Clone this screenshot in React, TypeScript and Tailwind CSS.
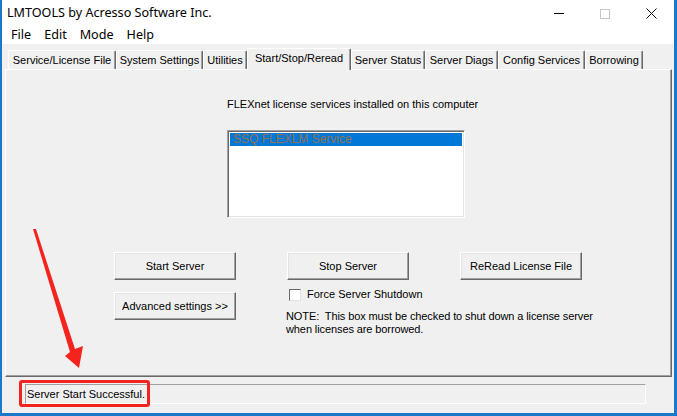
import React from "react";

const tabs = [
  { label: "Service/License File", w: "w-[108px]" },
  { label: "System Settings", w: "w-[87px]" },
  { label: "Utilities", w: "w-[44px]" },
  { label: "Start/Stop/Reread", w: "w-[104px]", active: true },
  { label: "Server Status", w: "w-[74px]" },
  { label: "Server Diags", w: "w-[73px]" },
  { label: "Config Services", w: "w-[87px]" },
  { label: "Borrowing", w: "w-[58px]" },
];

function Button({ children }: { children: React.ReactNode }) {
  return (
    <div className="w-[122px] h-[28px] bg-[#f0f0f0] border border-t-white border-l-white border-r-[#696969] border-b-[#696969] shadow-[inset_-1px_-1px_0_#a0a0a0,inset_1px_1px_0_#e3e3e3] flex items-center justify-center text-[11px] text-black">
      {children}
    </div>
  );
}

export default function App() {
  return (
    <div className="relative w-[677px] h-[416px] overflow-hidden bg-[#f0f0f0] border-l-2 border-r-[3px] border-b-[3px] border-[#1c78c9] flex flex-col font-['Liberation_Sans',Arial,sans-serif] text-black">
      {/* title bar */}
      <div className="h-[27px] bg-white flex items-center shrink-0">
        <div className="pl-[5px] text-[12.6px] font-['Noto_Sans',sans-serif] text-black flex-1">
          LMTOOLS by Acresso Software Inc.
        </div>
        <div className="flex h-full">
          <div className="w-[46px] h-full flex items-center justify-center">
            <div className="w-[10px] h-px bg-black" />
          </div>
          <div className="w-[46px] h-full flex items-center justify-center">
            <div className="w-[10px] h-[10px] border border-[#c6c6c6]" />
          </div>
          <div className="w-[46px] h-full flex items-center justify-center">
            <svg width="11" height="11" viewBox="0 0 11 11">
              <path d="M0.5 0.5 L10.5 10.5 M10.5 0.5 L0.5 10.5" stroke="#111" strokeWidth="1" />
            </svg>
          </div>
        </div>
      </div>

      {/* menu bar */}
      <div className="h-[17px] bg-white flex items-center gap-[13px] pl-[9px] text-[12.6px] font-['Noto_Sans',sans-serif] shrink-0">
        <span>File</span>
        <span>Edit</span>
        <span>Mode</span>
        <span>Help</span>
      </div>

      {/* tabs */}
      <div className="h-[25px] flex items-end pl-[6px] shrink-0">
        {tabs.map((t) =>
          t.active ? (
            <div
              key={t.label}
              className={`${t.w} h-[22px] -mb-[1px] relative z-10 bg-[#f0f0f0] border-t border-l border-white border-r border-r-[#696969] shadow-[inset_-1px_0_0_#a0a0a0] rounded-tl-[2px] rounded-tr-[2px] flex justify-center pt-[3px] text-[11px] leading-[13px]`}
            >
              {t.label}
            </div>
          ) : (
            <div
              key={t.label}
              className={`${t.w} h-[19px] bg-[#f0f0f0] border-t border-l border-white border-r border-r-[#696969] shadow-[inset_-1px_0_0_#a0a0a0] rounded-tl-[2px] rounded-tr-[2px] flex justify-center pt-[3px] text-[11px] leading-[13px]`}
            >
              {t.label}
            </div>
          )
        )}
      </div>

      {/* tab panel */}
      <div className="ml-[3px] mr-[2px] h-[308px] shrink-0 border-t border-l border-white border-r border-b border-r-[#696969] border-b-[#696969] shadow-[inset_-1px_-1px_0_#a0a0a0] flex flex-col text-[11px] leading-[13px]">
        <div className="ml-[221px] mt-[28px]">FLEXnet license services installed on this computer</div>

        <div className="ml-[221px] mt-[19px] w-[238px] h-[88px] bg-white border border-t-[#a0a0a0] border-l-[#a0a0a0] border-r-white border-b-white shadow-[inset_1px_1px_0_#696969,inset_-1px_-1px_0_#e3e3e3] p-[2px]">
          <div className="h-[13px] bg-[#0078d7] text-[#95724e] pl-[3px] text-[12px] leading-[13px]">
            SSQ FLEXLM Service
          </div>
        </div>

        <div className="ml-[108px] mt-[34px] flex gap-[51px]">
          <Button>Start Server</Button>
          <Button>Stop Server</Button>
          <Button>ReRead License File</Button>
        </div>

        <div className="ml-[108px] mt-[8px] flex items-start gap-[51px]">
          <div className="mt-[4px]">
            <Button>Advanced settings &gt;&gt;</Button>
          </div>
          <div className="flex flex-col">
            <div className="flex items-center gap-[6px] ml-[2px]">
              <div className="w-[12px] h-[12px] bg-white border border-t-[#696969] border-l-[#696969] border-r-[#e3e3e3] border-b-[#e3e3e3]" />
              <span>Force Server Shutdown</span>
            </div>
            <div className="mt-[9px] -ml-[1px] tracking-[-0.1px]">
              NOTE:&nbsp; This box must be checked to shut down a license server
              <br />
              when licenses are borrowed.
            </div>
          </div>
        </div>
      </div>

      {/* status bar */}
      <div className="ml-[23px] mt-[7px] w-[621px] h-[20px] shrink-0 border border-t-[#a0a0a0] border-l-[#a0a0a0] border-r-white border-b-white flex items-center pl-[1px] text-[11px]">
        Server Start Successful.
      </div>

      {/* red annotations */}
      <div className="absolute left-[17px] top-[380px] w-[131px] h-[27px] border-[3px] border-[#f5231e] rounded-[3px]" />
      <svg className="absolute left-0 top-0 pointer-events-none" width="677" height="416">
        <polygon
          points="31,229 34,229 73,349 81,346 77,368 63,356 68,352"
          fill="#f5231e"
        />
      </svg>
    </div>
  );
}
